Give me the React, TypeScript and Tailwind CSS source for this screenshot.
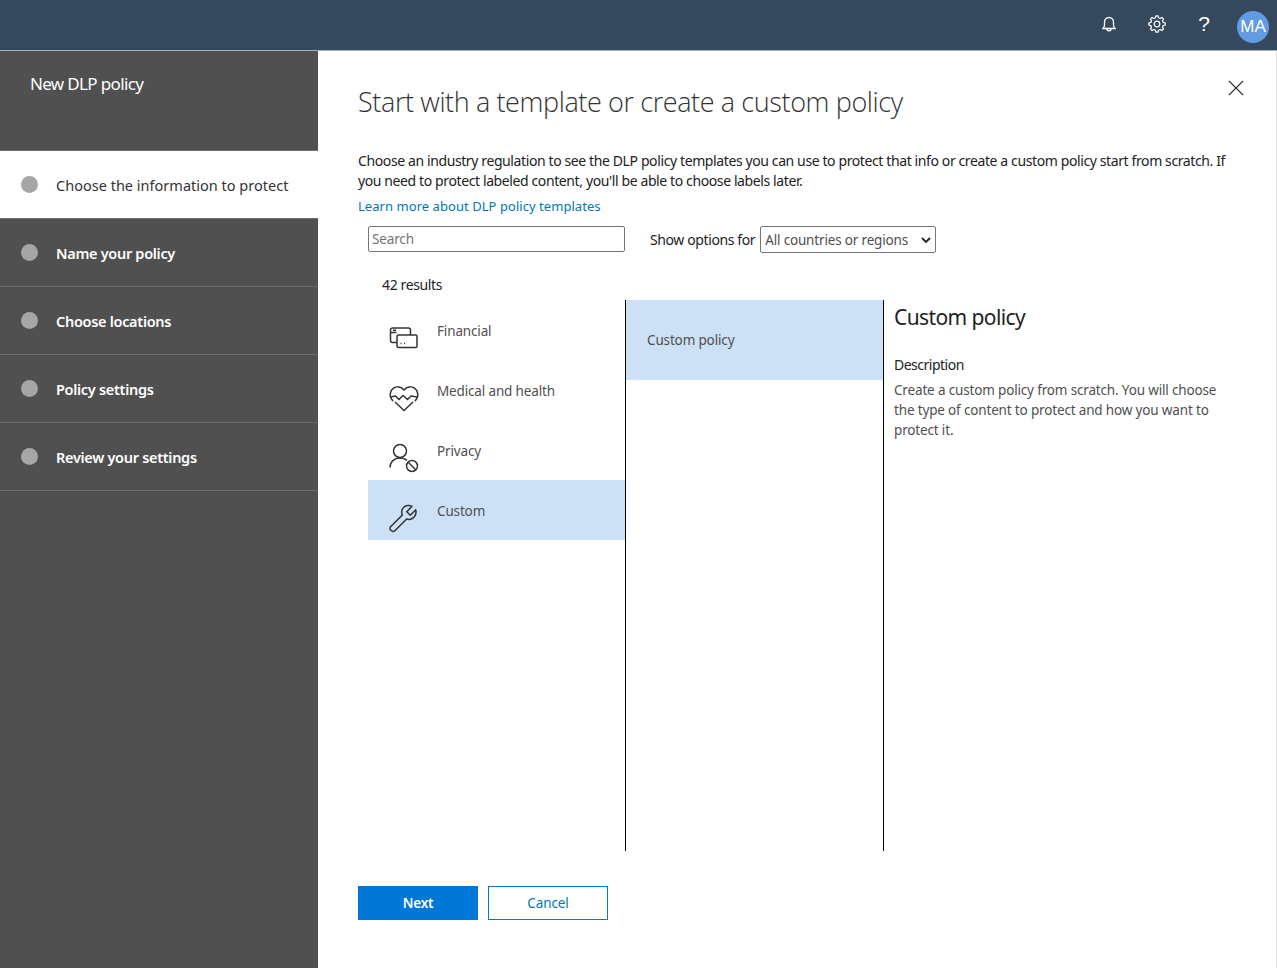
import React from "react";

function gearPath() {
  const pts: string[] = [];
  const n = 8;
  for (let i = 0; i < n; i++) {
    const a = (i / n) * Math.PI * 2 - Math.PI / 2;
    const w = Math.PI / n;
    const list: [number, number][] = [
      [6.4, a - w * 0.62],
      [8.2, a - w * 0.36],
      [8.2, a + w * 0.36],
      [6.4, a + w * 0.62],
    ];
    list.forEach(([r, t]) => pts.push(`${(9 + r * Math.cos(t)).toFixed(2)} ${(9 + r * Math.sin(t)).toFixed(2)}`));
  }
  return `M${pts.join("L")}Z`;
}

function Step({ label, active }: { label: string; active?: boolean }) {
  return (
    <div className={active ? "h-[68px] bg-white flex items-center pl-[21px] pt-[2px] border-b border-[#6d6d6d]" : "h-[68px] flex items-center pl-[21px] pt-[2px] border-b border-[#6d6d6d]"}>
      <span className="w-[17px] h-[17px] rounded-full bg-[#a6a6a6] shrink-0 -mt-[2px]" />
      <span className={active ? "ml-[18px] text-[14.5px] text-[#333333] tracking-[0.01px]" : "ml-[18px] text-[14.5px] font-semibold text-white tracking-[-0.3px]"}>{label}</span>
    </div>
  );
}

function Card() {
  return (
    <svg width="30" height="22" viewBox="0 0 30 22" fill="none" stroke="#333" strokeWidth="1.5">
      <path d="M8 15.500H3.500a2 2 0 0 1-2-2V3a2 2 0 0 1 2-2h16a2 2 0 0 1 2 2v5" />
      <path d="M1.500 5.500h6M4 3.200h3" />
      <rect x="8" y="8" width="20" height="12.500" rx="1.500" />
      <path d="M11.500 16.500h1M15 16.500h1" />
    </svg>
  );
}

function Heart() {
  return (
    <svg width="30" height="28" viewBox="0 0 30 28" fill="none" stroke="#333" strokeWidth="1.500">
      <path d="M4 17 2.500 15C.2 12 1 6.500 4.500 4.200c3.500-2.300 7.800-1.300 10.500 1.800 2.700-3.100 7-4.100 10.500-1.800C29 6.500 29.800 12 27.500 15L26 17" />
      <path d="M1.500 13l5-1 3.500 3.500 4-4 4.500 4 3.500-3.500 6.500 1" />
      <path d="m6 18 9 8.500 9-8.500" />
    </svg>
  );
}

function Person() {
  return (
    <svg width="30" height="30" viewBox="0 0 30 30" fill="none" stroke="#333" strokeWidth="1.500">
      <circle cx="11" cy="8" r="6.500" />
      <path d="M1 24.500C1 19 5 15 11 15c3 0 5.500 1 7 2.500" />
      <circle cx="23" cy="23" r="5.500" />
      <path d="m19 19 8 8" />
    </svg>
  );
}

function Wrench() {
  return (
    <svg width="30" height="30" viewBox="0 0 30 30" fill="none" stroke="#333" strokeWidth="1.500">
      <path d="M18.500 2.500c-3.500.5-6 3.500-5.800 7 0 1 .3 1.800.6 2.500L1.800 23.500c-1.200 1.300-1 3 .2 4 1.200 1.200 3 1.200 4.100 0L17.600 16c.8.300 1.800.5 2.700.4 3.900-.2 7-3.600 6.700-8l-.4-1.400-5.300 5.200-3.500-3.500 5.200-5.400c-1.400-.7-2.900-1-4.500-.8z" />
    </svg>
  );
}

function Category({ label, icon, active }: { label: string; icon: React.ReactNode; active?: boolean }) {
  return (
    <div className={active ? "h-[60px] bg-[#cce1f5] flex" : "h-[60px] flex"}>
      <div className="w-[69px] pl-[21px] h-[76px] flex items-center shrink-0">{icon}</div>
      <div className="text-[13.5px] text-[#505050] pt-[20px] leading-[22px] tracking-[-0.15px]">{label}</div>
    </div>
  );
}

export default function App() {
  return (
    <div className="w-[1277px] h-[968px] overflow-hidden flex flex-col bg-white" style={{ fontFamily: '"Noto Sans", "Open Sans", sans-serif' }}>
      <header className="h-[51px] shrink-0 bg-[#34495e] border-b border-[#a9b0b6] flex items-center justify-end text-white">
        <div className="flex items-center">
          <svg className="mr-[32px] -mt-[3px]" width="14" height="16" viewBox="0 0 14 16" fill="none" stroke="#fff" strokeWidth="1.300">
            <path d="M1 12.500h12c-1-1-1.500-2-1.500-4V6a4.500 4.500 0 0 0-9 0v2.500c0 2-.5 3-1.500 4z" />
            <path d="M5 13c0 2.500 4 2.500 4 0" />
          </svg>
          <svg className="mr-[32px] -mt-[3px]" width="18" height="18" viewBox="0 0 18 18" fill="none" stroke="#fff" strokeWidth="1.200">
            <circle cx="9" cy="9" r="2.800" />
            <path d={gearPath()} strokeLinejoin="round" />
          </svg>
          <span className="mr-[27px] -mt-[3px] text-[21px] font-light leading-none" style={{ fontFamily: '"Liberation Sans", sans-serif' }}>?</span>
          <div className="w-[32px] h-[32px] mr-[8px] mt-[3px] rounded-full bg-[#639be2] flex items-center justify-center text-[17px]" style={{ fontFamily: '"Liberation Sans", sans-serif' }}>MA</div>
        </div>
      </header>
      <div className="flex-1 flex min-h-0">
        <aside className="w-[318px] shrink-0 bg-[#505050]">
          <div className="h-[100px] pl-[30px] pt-[21px] text-[17px] leading-[24px] text-white tracking-[-0.65px] border-b border-[#6d6d6d]">New DLP policy</div>
          <Step label="Choose the information to protect" active />
          <Step label="Name your policy" />
          <Step label="Choose locations" />
          <Step label="Policy settings" />
          <Step label="Review your settings" />
        </aside>
        <main className="flex-1 relative pl-[40px] border-r border-[#e1e1e1]">
          <svg className="absolute right-[32px] top-[29px]" width="16" height="16" viewBox="0 0 16 16" fill="none" stroke="#333" strokeWidth="1.100">
            <path d="m1 1 14 14M15 1 1 15" />
          </svg>
          <h1 className="pt-[32px] text-[27px] font-light leading-[38px] text-[#333333] tracking-[-0.39px]" style={{ fontFamily: '"Open Sans", sans-serif' }}>Start with a template or create a custom policy</h1>
          <p className="mt-[30px] w-[880px] text-[14px] leading-[20px] text-[#222222] tracking-[-0.39px]">
            Choose an industry regulation to see the DLP policy templates you can use to protect that info or create a custom policy start from scratch. If you need to protect labeled content, you'll be able to choose labels later.
          </p>
          <a className="block mt-[5px] text-[13px] leading-[20px] text-[#0078b8] tracking-[0.05px]">Learn more about DLP policy templates</a>
          <div className="flex items-center mt-[9px] ml-[10px] h-[28px]">
            <div className="w-[257px] h-[26px] border border-[#767676] rounded-[2px] pl-[3px] text-[13.5px] leading-[24px] text-[#757575] tracking-[-0.15px]">Search</div>
            <span className="ml-[25px] text-[14px] text-[#222222] tracking-[-0.39px]">Show options for</span>
            <div className="ml-[5px] w-[176px] h-[27px] border border-[#767676] rounded-[2px] pl-[4px] pr-[4px] pt-[2px] flex items-center justify-between text-[13.5px] text-[#505050] tracking-[-0.17px]">
              <span>All countries or regions</span>
              <svg width="10" height="7" viewBox="0 0 10 7" fill="none" stroke="#222" strokeWidth="1.800"><path d="m1 1 4 4 4-4" /></svg>
            </div>
          </div>
          <div className="ml-[24px] mt-[20px] h-[24px] text-[14px] leading-[24px] text-[#222222] tracking-[-0.38px]">42 results</div>
          <div className="flex ml-[10px] mt-[3px] h-[551px]">
            <div className="w-[258px] border-r border-black">
              <Category label="Financial" icon={<Card />} />
              <Category label="Medical and health" icon={<Heart />} />
              <Category label="Privacy" icon={<Person />} />
              <Category label="Custom" icon={<Wrench />} active />
            </div>
            <div className="w-[258px] border-r border-black">
              <div className="h-[80px] bg-[#cce1f5] pl-[21px] flex items-center text-[13.5px] text-[#505050] tracking-[-0.15px]">Custom policy</div>
            </div>
            <div className="pl-[10px] flex-1">
              <div className="text-[21px] leading-[34px] font-normal text-[#222222] tracking-[-0.6px]">Custom policy</div>
              <div className="mt-[20px] text-[14px] leading-[22px] text-[#222222] tracking-[-0.5px]">Description</div>
              <div className="mt-[4px] w-[340px] text-[13.5px] leading-[20px] text-[#505050] tracking-[-0.16px]">Create a custom policy from scratch. You will choose the type of content to protect and how you want to protect it.</div>
            </div>
          </div>
          <div className="flex mt-[35px] gap-[10px]">
            <div className="w-[120px] h-[34px] bg-[#0078d7] text-white text-[13.5px] font-semibold flex items-center justify-center tracking-[-0.2px]">Next</div>
            <div className="w-[120px] h-[34px] border border-[#0078d7] text-[#0078b8] text-[13.5px] flex items-center justify-center tracking-[-0.1px]">Cancel</div>
          </div>
        </main>
      </div>
    </div>
  );
}
